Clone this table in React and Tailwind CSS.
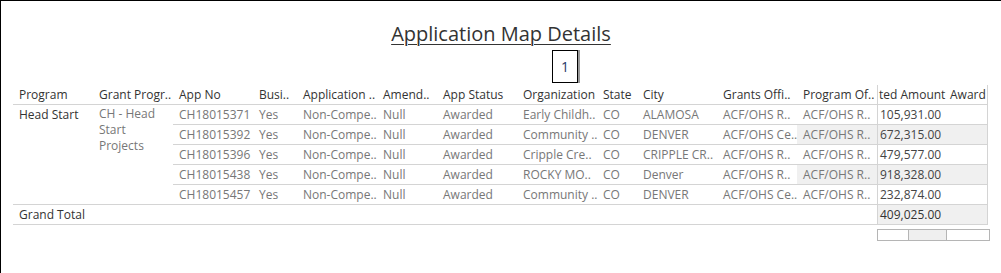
import React from "react";

const cols = "grid-cols-[80px_80px_80px_44px_80px_60px_80px_80px_40px_80px_80px_80px_72px_39px]";

const headers = [
  "Program",
  "Grant Progr..",
  "App No",
  "Busi..",
  "Application ..",
  "Amend..",
  "App Status",
  "Organization",
  "State",
  "City",
  "Grants Offi..",
  "Program Of..",
];

const rows = [
  ["CH18015371", "Yes", "Non-Compe..", "Null", "Awarded", "Early Childh..", "CO", "ALAMOSA", "ACF/OHS R..", "ACF/OHS R..", "105,931.00"],
  ["CH18015392", "Yes", "Non-Compe..", "Null", "Awarded", "Community ..", "CO", "DENVER", "ACF/OHS Ce..", "ACF/OHS R..", "672,315.00"],
  ["CH18015396", "Yes", "Non-Compe..", "Null", "Awarded", "Cripple Cre..", "CO", "CRIPPLE CR..", "ACF/OHS R..", "ACF/OHS R..", "479,577.00"],
  ["CH18015438", "Yes", "Non-Compe..", "Null", "Awarded", "ROCKY MO..", "CO", "Denver", "ACF/OHS R..", "ACF/OHS R..", "918,328.00"],
  ["CH18015457", "Yes", "Non-Compe..", "Null", "Awarded", "Community ..", "CO", "DENVER", "ACF/OHS Ce..", "ACF/OHS R..", "232,874.00"],
];

export default function App() {
  return (
    <div
      className="h-[273px] w-[1001px] overflow-hidden border-t border-l border-black bg-white text-[12px]"
      style={{ fontFamily: "'Open Sans', 'Noto Sans', sans-serif" }}
    >
      {/* Title */}
      <div className="pt-[20px] text-center text-[20px] leading-[26px] text-[#333] underline decoration-1 underline-offset-[3px]">
        Application Map Details
      </div>

      {/* Page box */}
      <div className="mt-[3px] ml-[551px] flex h-[33px] w-[28px] border-r-2 border-[#999]">
        <div className="flex h-full w-[26px] items-center justify-center border border-black text-[14px] text-[#1f3a68]">
          1
        </div>
      </div>

      {/* Table */}
      <div className={`ml-[12px] mt-[2px] grid ${cols} grid-rows-[20px_20px_20px_20px_20px_20px_20px] leading-[20px]`}>
        {headers.map((h) => (
          <div key={h} className="truncate border-b border-[#d4d4d4] pl-[6px] whitespace-nowrap text-[#333]">
            {h}
          </div>
        ))}
        <div className="overflow-hidden whitespace-nowrap border-b border-l border-[#d4d4d4] pl-[1px] text-[#333]">
          ted Amount
        </div>
        <div className="overflow-hidden whitespace-nowrap border-b border-r border-[#d4d4d4] pl-[1px] text-[#333]">
          Award
        </div>

        <div className="row-span-5 border-b border-[#d4d4d4] pl-[6px] leading-[18px] pt-px font-medium text-[#333]">
          Head Start
        </div>
        <div className="row-span-5 border-b border-[#d4d4d4] pl-[6px] pr-[4px] pt-px leading-[16px] text-[#777]">
          CH - Head Start Projects
        </div>

        {rows.map((r, i) => {
          const band = i % 2 === 1 ? "bg-[#f0f0f0]" : "bg-white";
          return (
            <React.Fragment key={r[0]}>
              {r.slice(0, 9).map((c, j) => (
                <div key={j} className="whitespace-nowrap border-b border-[#d4d4d4] pl-[6px] text-[#777]">
                  {c}
                </div>
              ))}
              <div className={`whitespace-nowrap border-b border-[#d4d4d4] pl-[6px] text-[#777] ${band}`}>
                {r[9]}
              </div>
              <div className={`whitespace-nowrap border-b border-l border-[#d4d4d4] pl-[2px] text-[#444] ${band}`}>
                {r[10]}
              </div>
              <div className={`border-b border-r border-[#d4d4d4] ${band}`}></div>
            </React.Fragment>
          );
        })}

        <div className="col-span-12 border-b border-[#d4d4d4] pl-[6px] font-medium text-[#333]">Grand Total</div>
        <div className="whitespace-nowrap border-b border-l border-[#d4d4d4] bg-[#f0f0f0] pl-[2px] text-[#333]">
          409,025.00
        </div>
        <div className="border-b border-r border-[#d4d4d4] bg-[#f0f0f0]"></div>
      </div>

      {/* Scroll box */}
      <div className="ml-[876px] mt-[4px] flex h-[12px] w-[113px] border border-[#b5b5b5]">
        <div className="w-[31px] border-r border-[#b5b5b5] bg-white"></div>
        <div className="w-[38px] border-r border-[#b5b5b5] bg-[#efefef]"></div>
        <div className="flex-1 bg-white"></div>
      </div>
    </div>
  );
}
